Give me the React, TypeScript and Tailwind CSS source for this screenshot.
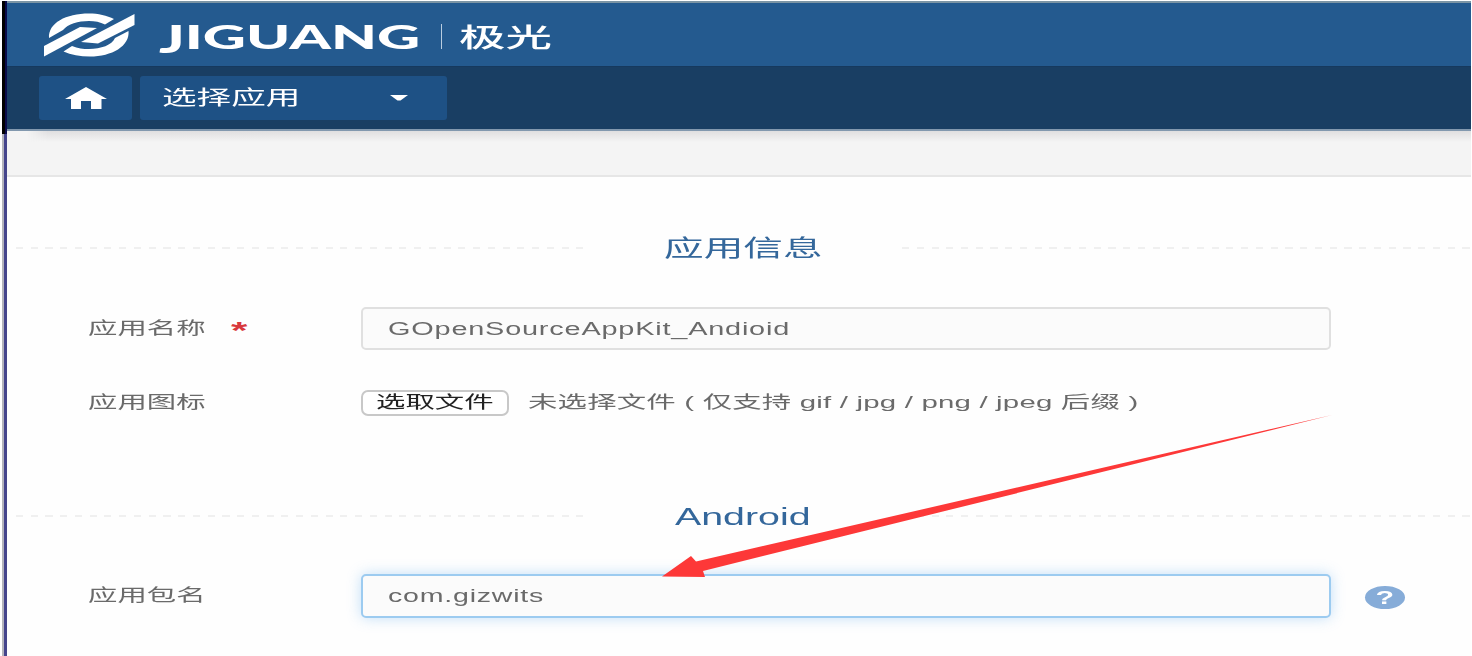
import type { ReactNode } from "react";

const sans = "font-['Liberation_Sans','Noto_Sans_CJK_SC',sans-serif]";

function Wide({ className = "", children }: { className?: string; children: ReactNode }) {
  return (
    <span className={`inline-block whitespace-nowrap ${className}`}>{children}</span>
  );
}

function Dashes() {
  return (
    <div className="h-[2px] bg-[repeating-linear-gradient(90deg,#f0f0f0_0px,#f0f0f0_7px,transparent_7px,transparent_14.75px)]" />
  );
}

function SectionTitle({ children }: { children: ReactNode }) {
  return (
    <div className="flex h-10 items-center">
      <div className="w-[567px] shrink-0 ml-[9px]">
        <Dashes />
      </div>
      <h2 className="w-[319px] shrink-0 text-[#34679b]">{children}</h2>
      <div className="flex-1">
        <Dashes />
      </div>
    </div>
  );
}

function Label({ children }: { children: ReactNode }) {
  return (
    <label className="w-[273px] shrink-0 pb-[3px] text-[17.3px] leading-6 text-[#6a6a6a]">{children}</label>
  );
}

function Logo() {
  return (
    <svg className="block h-[44px] w-[92px]" viewBox="44 13 92 44" fill="#fff">
      <path d="M49 38 C48 23 66 13.500 89 13.500 C98 13.500 107 15.500 114 19 L105 24.500 C100 22 95 21 89 21 C78 21 68 24 63 30 Z" />
      <path d="M134.500 14 V25 L98 43.500 L81 42 Z" />
      <path d="M44 56.500 V46 L80 27 L97 28 Z" />
      <path d="M128.500 31 C130 46 112 56.500 90 56.500 C80 56.500 71 55 63.500 51.500 L72 46 C78 48.500 83 49 89 49 C101 49 112 45 115 38 Z" />
    </svg>
  );
}

export default function App() {
  return (
    <div className={`relative flex h-[656px] w-[1472px] overflow-hidden bg-white pt-px pl-[2px] pr-px ${sans}`}>
      <div className="flex w-[5px] shrink-0 flex-col">
        <div className="h-[133px] border-r-2 border-[#0b0b4a] bg-black" />
        <div className="flex-1 border-r-[3px] border-l-2 border-l-[#b4b4bc] border-r-[#45458c]" />
      </div>
      <div className="flex flex-1 flex-col bg-[#fefefe]">
        <header className="flex h-[65px] shrink-0 items-start border-t-2 border-[#7c95a5] bg-[#245a8f] text-white">
          <div className="ml-[37px] mt-[10px]">
            <Logo />
          </div>
          <div className="ml-[23px] mt-[14px] w-[282px] font-['Lato',sans-serif] text-[31.5px] leading-10 font-black">
            <Wide className="origin-left scale-x-[1.89]">
              <span className="inline-block origin-[0_25%] scale-y-[1.2]">J</span>IGUANG
            </Wide>
          </div>
          <div className="mt-[21px] h-[25px] w-px bg-[#b9cde0]" />
          <div className="ml-[17px] mt-[15px] text-[26px] leading-10 font-medium">
            <Wide className="origin-left scale-x-[1.79]">极光</Wide>
          </div>
        </header>
        <nav className="relative z-10 flex h-[65px] shrink-0 items-start gap-2 border-t border-b-2 border-t-[#16395e] border-b-[#8298ae] bg-[#193e63] pt-[9px] pl-8">
          <button className="flex h-[44px] w-[93px] items-center justify-center rounded-[3px] bg-[#1e5185]">
            <svg className="h-[22px] w-[42px]" viewBox="0 0 42 22" fill="#fff">
              <path d="M21 0 L42 12 H36.500 V22 H26 V14 H16 V22 H6 V12 H0 Z" />
            </svg>
          </button>
          <button className="flex h-[44px] w-[307px] items-center rounded-[3px] bg-[#1e5185] pl-[22px] text-[20px] text-white">
            <span className="w-[228px] text-left">
              <Wide className="origin-left scale-x-[1.73]">选择应用</Wide>
            </span>
            <svg className="h-[6px] w-[18px]" viewBox="0 0 18 6" fill="#fff">
              <path d="M0 0 H18 L10.500 5.500 H7.500 Z" />
            </svg>
          </button>
        </nav>
        <div className="h-[46px] shrink-0 border-b-2 border-[#e6e6e6] bg-[#f4f4f4]">
          <div className="ml-5 h-[11px] bg-linear-to-b from-[#e0dfe0] to-[#f4f4f4] [mask-image:linear-gradient(90deg,transparent,#000_20px)]" />
        </div>

        <main className="flex flex-col">
          <div className="mt-[51px]">
            <SectionTitle>
              <span className="ml-[81px] block text-[23px] leading-8">
                <Wide className="origin-left scale-x-[1.725]">应用信息</Wide>
              </span>
            </SectionTitle>
          </div>
          <div className="mt-[39px] flex h-[43px] items-center pl-[81px]">
            <Label>
              <span className="inline-block w-[143px]">
                <Wide className="origin-left scale-x-[1.7]">应用名称</Wide>
              </span>
              <Wide className="origin-left translate-y-[5px] scale-x-[1.75] text-[24px] leading-none font-bold text-[#d8383c]">*</Wide>
            </Label>
            <div className="flex h-[43px] w-[970px] items-center rounded-[5px] border-2 border-[#e0e0e0] bg-[#fbfbfb] pt-px pl-[25px] text-[18px] tracking-[0.5px] text-[#6a6a6a]">
              <Wide className="origin-left scale-x-[1.604]">GOpenSourceAppKit_Andioid</Wide>
            </div>
          </div>
          <div className="mt-[40px] flex h-[26px] items-center pl-[81px]">
            <Label>
              <Wide className="origin-left scale-x-[1.7]">应用图标</Wide>
            </Label>
            <button className="flex h-[26px] w-[148px] items-center rounded-[7px] border-2 border-[#c8c8c8] bg-white pl-[13px] text-[17.3px] text-[#222]">
              <Wide className="origin-left scale-x-[1.7]">选取文件</Wide>
            </button>
            <div className="ml-[19px] text-[17.3px] tracking-[0.12px] text-[#6a6a6a]">
              <Wide className="origin-left scale-x-[1.7]">未选择文件 ( 仅支持 gif / jpg / png / jpeg 后缀 )</Wide>
            </div>
          </div>
          <div className="mt-[80px]">
            <SectionTitle>
              <span className="ml-[92px] block pt-px text-[23px] leading-8">
                <Wide className="origin-left scale-x-[1.71]">Android</Wide>
              </span>
            </SectionTitle>
          </div>
          <div className="mt-[38px] flex h-[44px] items-center pl-[81px]">
            <Label>
              <Wide className="origin-left scale-x-[1.7]">应用包名</Wide>
            </Label>
            <div className="flex h-[44px] w-[970px] items-center rounded-[5px] border-2 border-[#9ccbf0] bg-[#fbfbfb] pt-px pl-[25px] text-[18px] tracking-[0.5px] text-[#6a6a6a] shadow-[0_0_14px_rgba(120,185,240,0.45)]">
              <Wide className="origin-left scale-x-[1.585]">com.gizwits</Wide>
            </div>
            <div className="ml-[34px] mt-[3px] flex h-[23px] w-[40px] items-center justify-center rounded-[50%] bg-[#86acd8] text-[19px] leading-none font-bold text-white">
              <Wide className="scale-x-[1.6]">?</Wide>
            </div>
          </div>
        </main>
      </div>
      <svg className="pointer-events-none absolute inset-0 z-20 h-[656px] w-[1472px]" viewBox="0 0 1472 656">
        <path d="M662 576.500 L691 556 L696 561.500 L1332 415 L703 571 L705 577 Z" fill="#fd3838" />
      </svg>
    </div>
  );
}
